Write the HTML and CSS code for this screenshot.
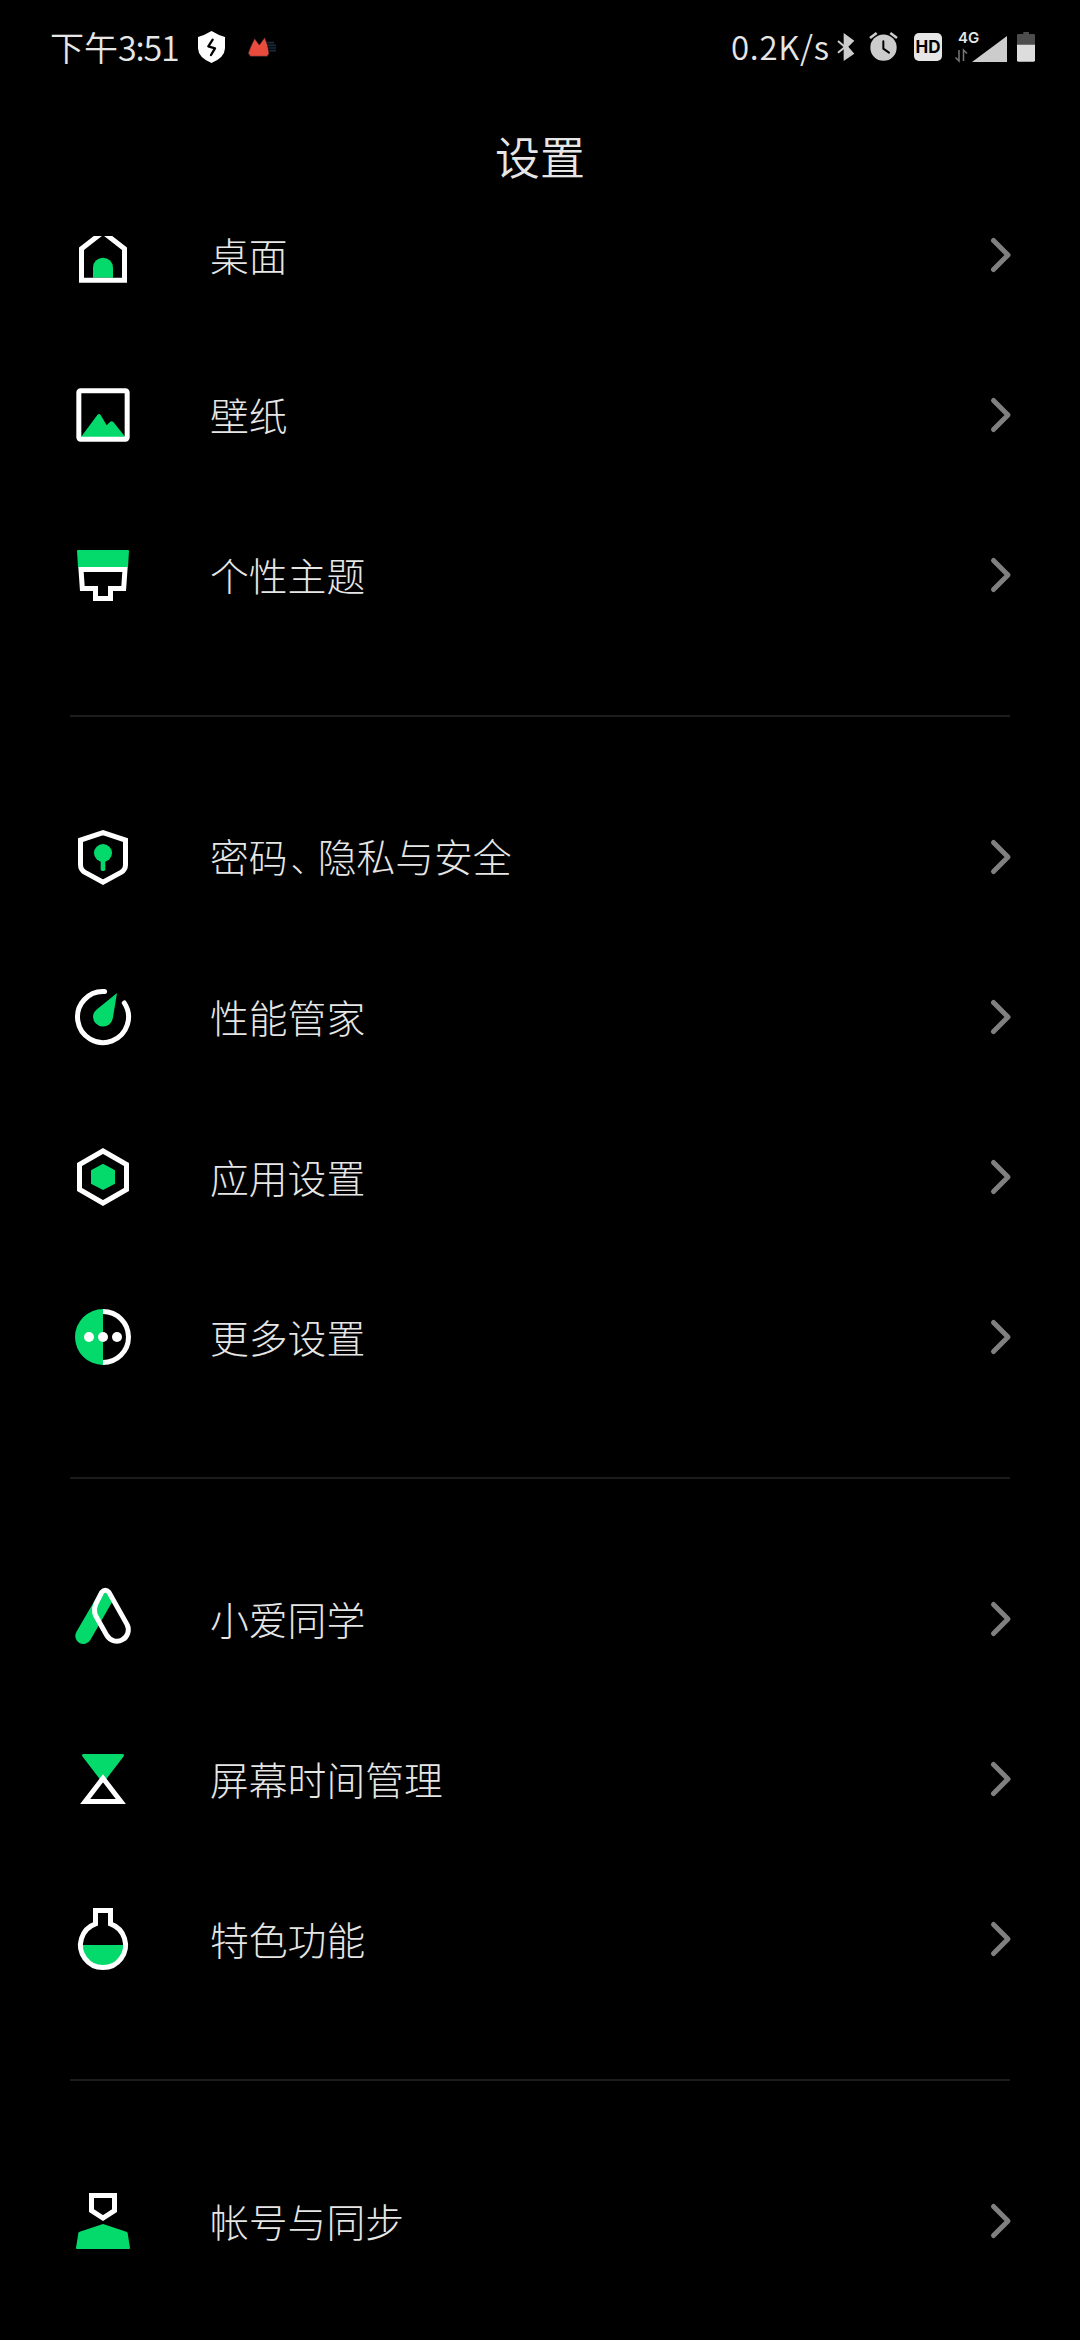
FILE: index.html
```html
<!DOCTYPE html>
<html lang="zh-CN">
<head>
<meta charset="utf-8">
<title>设置</title>
<link rel="stylesheet" href="styles.css">
</head>
<body>
<div class="status">
  <div class="status-left">
    <span class="clock">下午<span class="digits">3:51</span></span>
    <svg class="s-shield" width="27" height="32" viewBox="0 0 81 96"><path fill="#fff" d="M40.500 0Q60 12 81 18V52Q80 80 40.500 96Q1 80 0 52V18Q21 12 40.500 0Z"/><path fill="none" stroke="#000" stroke-width="7" stroke-linecap="round" stroke-linejoin="round" d="M44 26L31 46L51 52L39 72"/></svg>
    <svg class="s-app" width="28" height="20" viewBox="0 0 84 60"><path stroke="#1b2c3c" stroke-width="5" d="M58 17H78M60 25H84M62 33H84M64 41H84"/><path fill="#e94b3c" stroke="#33262b" stroke-width="2" stroke-linejoin="round" d="M1 49Q5 34 20 5L34 24L50 2Q61 24 63 49L58 58H7Z"/></svg>
  </div>
  <div class="status-right">
    <span class="speed">0.2K/s</span>
    <svg class="s-bt" width="18" height="28" viewBox="0 0 54 84"><path fill="#ccc" d="M20 0L52 23L34 41L52 62L20 84Z"/><path fill="none" stroke="#ccc" stroke-width="6" d="M3 24L24 42L3 59"/></svg>
    <svg class="s-alarm" width="29" height="30" viewBox="0 0 87 90"><circle cx="43.500" cy="47" r="39.500" fill="#ccc"/><path fill="none" stroke="#ccc" stroke-width="8" d="M3 18L23 3M64 3L84 18"/><path fill="none" stroke="#000" stroke-width="6" stroke-linecap="round" stroke-linejoin="round" d="M43 28V50L60 62"/></svg>
    <span class="hd">HD</span>
    <svg class="s-signal" width="53" height="32" viewBox="0 0 53 32"><text class="net" x="3" y="12">4G</text><path fill="none" stroke="#777" stroke-width="1.500" d="M4 19V30L0.500 26.500M8.500 30V19L12 22.500"/><path fill="#ccc" d="M52 5V31H17Z"/></svg>
    <svg class="s-battery" width="18" height="30" viewBox="0 0 54 90"><path fill="#4d4d4d" d="M19 0H36V6H50Q54 6 54 10V40H0V10Q0 6 4 6H19Z"/><path fill="#ddd" d="M0 38H54V85Q54 89 50 89H4Q0 89 0 85Z"/></svg>
  </div>
</div>
<h1 class="title">设置</h1>
<main class="list">
  <section class="group">
    <div class="row">
      <svg class="icon" viewBox="0 0 180 180"><path class="g" d="M60 158V128A30 30 0 0 1 120 128V158Z"/><path class="w" d="M25.500 71L90 21L154.500 71V165.500H25.500Z"/></svg>
      <span class="label">桌面</span><svg class="chev" viewBox="0 0 22 34"><path d="M4.500 2.500L19 17L4.500 31.500"/></svg>
    </div>
    <div class="row">
      <svg class="icon" viewBox="0 0 180 180"><path class="g" d="M24 156L73 90Q78 84 83 90L101 121L111 111Q116 107 121 111L157 156Z"/><rect class="w" x="17.500" y="17.500" width="145" height="145" rx="5"/></svg>
      <span class="label">壁纸</span><svg class="chev" viewBox="0 0 22 34"><path d="M4.500 2.500L19 17L4.500 31.500"/></svg>
    </div>
    <div class="row">
      <svg class="icon" viewBox="0 0 180 180"><path class="g" d="M16 15H164Q168 15 168 19L165 67H15L12 19Q12 15 16 15Z"/><path class="w" d="M24 73.500H156L152 130.500H112.500V160.500H67.500V130.500H28Z"/></svg>
      <span class="label">个性主题</span><svg class="chev" viewBox="0 0 22 34"><path d="M4.500 2.500L19 17L4.500 31.500"/></svg>
    </div>
  </section>
  <section class="group">
    <div class="row">
      <svg class="icon" viewBox="0 0 180 180"><circle class="g" cx="90" cy="78" r="27"/><rect class="g" x="83" y="90" width="14" height="42" rx="5"/><path class="w" d="M90 17L157.500 39V113Q157.500 128 144 136L90 165.500L36 136Q22.500 128 22.500 113V39Z"/></svg>
      <span class="label">密码<span class="comma">、</span>隐私与安全</span><svg class="chev" viewBox="0 0 22 34"><path d="M4.500 2.500L19 17L4.500 31.500"/></svg>
    </div>
    <div class="row">
      <svg class="icon" viewBox="0 0 180 180"><path class="g" d="M132 18L119.500 94A30 30 0 0 1 60 90Q60 77 72 67Z"/><path class="w cap" d="M95 13.700A76.500 76.500 0 1 0 154 48"/></svg>
      <span class="label">性能管家</span><svg class="chev" viewBox="0 0 22 34"><path d="M4.500 2.500L19 17L4.500 31.500"/></svg>
    </div>
    <div class="row">
      <svg class="icon" viewBox="0 0 180 180"><path class="g" d="M90 50L126 70V110L90 129L54 110V70Z"/><path class="w" d="M90 12L160.500 52.500V127.500L90 168L19.500 127.500V52.500Z"/></svg>
      <span class="label">应用设置</span><svg class="chev" viewBox="0 0 22 34"><path d="M4.500 2.500L19 17L4.500 31.500"/></svg>
    </div>
    <div class="row">
      <svg class="icon" viewBox="0 0 180 180"><path class="g" d="M90 6A84 84 0 0 0 90 174Z"/><path class="w" d="M90 13.500A76.500 76.500 0 0 1 90 166.500"/><g fill="#fff"><circle cx="48" cy="90" r="15"/><circle cx="90" cy="90" r="15"/><circle cx="132" cy="90" r="15"/></g></svg>
      <span class="label">更多设置</span><svg class="chev" viewBox="0 0 22 34"><path d="M4.500 2.500L19 17L4.500 31.500"/></svg>
    </div>
  </section>
  <section class="group">
    <div class="row">
      <svg class="icon" viewBox="0 0 180 180"><path class="g" d="M10 129L78 12Q97 -8 108 10L119 36L52 153A24 24 0 0 1 10 129Z"/><path class="w" d="M86 10Q97 -3 108 10L162 106A34.500 34.500 0 0 1 102 140L69 82Q60 64 69 44Z"/></svg>
      <span class="label">小爱同学</span><svg class="chev" viewBox="0 0 22 34"><path d="M4.500 2.500L19 17L4.500 31.500"/></svg>
    </div>
    <div class="row">
      <svg class="icon" viewBox="0 0 180 180"><path class="g" d="M32 15H148Q156 15 151 23L90 103L29 23Q24 15 32 15Z"/><path class="w" d="M90 88L36.500 157.500H143.500Z"/></svg>
      <span class="label">屏幕时间管理</span><svg class="chev" viewBox="0 0 22 34"><path d="M4.500 2.500L19 17L4.500 31.500"/></svg>
    </div>
    <div class="row">
      <svg class="icon" viewBox="0 0 180 180"><path class="g" d="M28 108H152A62 62 0 0 1 28 108Z"/><path class="w" d="M67.500 44.400V4.500H112.500V44.400A67.500 67.500 0 1 1 67.500 44.400Z"/></svg>
      <span class="label">特色功能</span><svg class="chev" viewBox="0 0 22 34"><path d="M4.500 2.500L19 17L4.500 31.500"/></svg>
    </div>
  </section>
  <section class="group">
    <div class="row">
      <svg class="icon" viewBox="0 0 180 180"><path class="g" d="M90 99L160 122Q163 123 164 127L171 171Q171 174 168 174H12Q9 174 9 171L16 127Q17 123 20 122Z"/><path class="w" d="M55.500 13.500H124.500V59L90 81L55.500 59Z"/></svg>
      <span class="label">帐号与同步</span><svg class="chev" viewBox="0 0 22 34"><path d="M4.500 2.500L19 17L4.500 31.500"/></svg>
    </div>
  </section>
</main>
</body>
</html>
```
FILE: styles.css
```css
* { box-sizing: border-box; }
body {
  margin: 0;
  width: 1080px;
  height: 2340px;
  overflow: hidden;
  display: flex;
  flex-direction: column;
  background: #000;
  color: #e6e6e6;
  font-family: "Noto Sans CJK SC", sans-serif;
}
svg { display: block; flex: none; overflow: visible; }
.status {
  height: 94px;
  flex: none;
  padding: 0 45px 0 50px;
  display: flex;
  justify-content: space-between;
}
.status-left, .status-right { display: flex; align-items: center; height: 94px; }
.clock { width: 148px; font-size: 34px; font-weight: 350; line-height: 92px; white-space: nowrap; }
.digits { letter-spacing: -1.2px; }
.speed { width: 106px; font-size: 33px; font-weight: 350; line-height: 90px; letter-spacing: 0.7px; white-space: nowrap; }
.digits, .speed { padding-bottom: 3px; }
.s-app { margin-left: 23px; }
.s-alarm { margin-left: 14px; }
.hd {
  width: 28px;
  height: 28px;
  margin-left: 16px;
  border-radius: 5px;
  background: #e6e6e6;
  color: #000;
  font: 700 17px/28px Inter, sans-serif;
  text-align: center;
}
.s-signal { margin-left: 13px; }
.net { font: 600 15px Inter, sans-serif; fill: #e6e6e6; }
.s-battery { margin-left: 9px; }
.title {
  margin: 0;
  height: 142px;
  flex: none;
  font-size: 45px;
  font-weight: 350;
  line-height: 124px;
  text-align: center;
}
.list { flex: 1; min-height: 0; overflow: hidden; padding: 0 70px; }
.group:first-child { margin-top: -61px; }
.group + .group { margin-top: 60px; padding-top: 60px; border-top: 2px solid #1c1c1c; }
.row { height: 160px; display: flex; align-items: center; padding-left: 3px; }
.icon { width: 60px; height: 60px; }
.label { flex: 1; margin-left: 77px; padding-bottom: 2px; font-size: 38.8px; font-weight: 300; line-height: 60px; white-space: nowrap; }
.comma { margin: 0 -8px 0 3px; font-size: 35px; }
.chev { width: 22px; height: 34px; margin-right: -1px; }
.chev path { fill: none; stroke: #808080; stroke-width: 5; stroke-linecap: round; stroke-linejoin: round; }
.g { fill: #04d96b; }
.w { fill: none; stroke: #fff; stroke-width: 15; }
.cap { stroke-linecap: round; }
```
